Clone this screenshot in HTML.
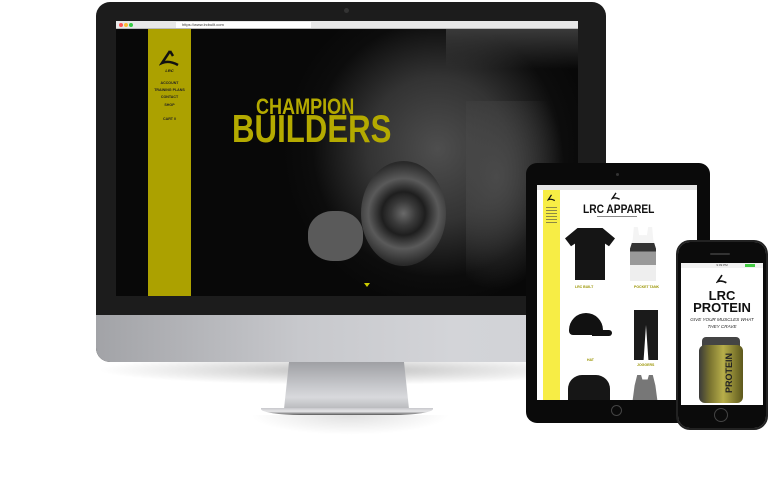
<!DOCTYPE html>
<html><head><meta charset="utf-8"><style>
*{margin:0;padding:0;box-sizing:border-box}
body{width:768px;height:494px;background:#fff;position:relative;overflow:hidden;font-family:"Liberation Sans",sans-serif}
.a{position:absolute}
.cond{font-family:"Liberation Sans Narrow","Liberation Sans",sans-serif;font-weight:bold}
</style></head><body>
<div class="a" style="left:96px;top:355px;width:500px;height:30px;background:radial-gradient(ellipse at center,rgba(0,0,0,.25),rgba(0,0,0,0) 70%)"></div>
<div class="a" style="left:96px;top:2px;width:510px;height:360px;border-radius:14px;background:#1c1c1c;overflow:hidden">
  <div class="a" style="left:0;top:313px;width:510px;height:47px;background:linear-gradient(90deg,#a2a3a7,#c7c8cc 40%,#d3d4d8 70%,#d0d1d5)"></div>
</div>
<div class="a" style="left:344px;top:8px;width:5px;height:5px;border-radius:50%;background:#333"></div>
<div class="a" style="left:116px;top:21px;width:462px;height:275px;background:#080808;overflow:hidden">
  <div class="a" style="left:0;top:0;width:462px;height:8px;background:#e8e8e8;border-bottom:1px solid #bbb"></div>
  <div class="a" style="left:3px;top:2px;width:4px;height:4px;border-radius:50%;background:#f55"></div>
  <div class="a" style="left:8px;top:2px;width:4px;height:4px;border-radius:50%;background:#fb3"></div>
  <div class="a" style="left:13px;top:2px;width:4px;height:4px;border-radius:50%;background:#3c4"></div>
  <div class="a" style="left:60px;top:1px;width:135px;height:6px;background:#fff;font-size:4px;line-height:6px;padding-left:6px;color:#333">https://www.lrcbuilt.com</div>
  <!-- photo -->
  <div class="a" style="left:150px;top:8px;width:312px;height:267px;background:radial-gradient(ellipse 50% 60% at 55% 45%,#4e4e4e,#333 45%,rgba(15,15,15,.6) 80%,rgba(8,8,8,0) 100%)"></div>
  <div class="a" style="left:330px;top:8px;width:132px;height:40px;background:linear-gradient(180deg,#3a3a3a,rgba(40,40,40,0))"></div>
  <div class="a" style="left:245px;top:140px;width:85px;height:105px;border-radius:50%;background:radial-gradient(circle,#6a6a6a 0,#3a3a3a 18%,#1e1e1e 32%,#5a5a5a 52%,#2a2a2a 75%,#1a1a1a 100%)"></div>
  <div class="a" style="left:192px;top:190px;width:55px;height:50px;border-radius:45%;background:#5a5a5a"></div>
  <div class="a" style="left:350px;top:80px;width:100px;height:190px;background:radial-gradient(ellipse at 30% 40%,#4a4a4a,rgba(30,30,30,0) 70%)"></div>
  <div class="a" style="left:32px;top:8px;width:43px;height:267px;background:#aca100"></div>
  <svg class="a" style="left:43px;top:28px" width="22" height="22" viewBox="0 0 22 22"><path d="M11 2 L3 14 Q10 11 19 16" fill="none" stroke="#111" stroke-width="2.5"/><path d="M11 2 L14 7" stroke="#111" stroke-width="2.5"/></svg>
  <div class="a cond" style="left:32px;top:47px;width:43px;text-align:center;font-size:4px;color:#111;font-style:italic">LRC</div>
  <div class="a cond" style="left:32px;top:59px;width:43px;text-align:center;font-size:3.6px;line-height:7.2px;color:#222">ACCOUNT<br>TRAINING PLANS<br>CONTACT<br>SHOP<br><br>CART 0</div>
  <div class="a cond" style="left:140px;top:75px;font-size:22px;line-height:22px;color:#b4aa00;transform:scaleX(.82);transform-origin:left">CHAMPION</div>
  <div class="a cond" style="left:116px;top:89px;font-size:39px;line-height:39px;color:#b4aa00;transform:scaleX(.8);transform-origin:left">BUILDERS</div>
  <div class="a" style="left:248px;top:262px;width:0;height:0;border-left:3px solid transparent;border-right:3px solid transparent;border-top:4px solid #cc0"></div>
</div>
<div class="a" style="left:284px;top:362px;width:125px;height:47px;clip-path:polygon(4% 0,96% 0,100% 100%,0 100%);background:linear-gradient(180deg,#9fa0a4,#c6c7cb 50%,#d8d9dc 75%,#b8b9bc)"></div>
<div class="a" style="left:261px;top:408px;width:172px;height:7px;border-radius:0 0 40px 40px/0 0 6px 6px;background:linear-gradient(180deg,#c8c8cc,#e6e6e8 50%,#555)"></div>
<div class="a" style="left:250px;top:415px;width:200px;height:20px;background:radial-gradient(ellipse at top,rgba(0,0,0,.12),rgba(0,0,0,0) 70%)"></div>
<!-- iPad -->
<div class="a" style="left:526px;top:163px;width:184px;height:260px;border-radius:11px;background:#0a0a0a"></div>
<div class="a" style="left:616px;top:173px;width:3px;height:3px;border-radius:50%;background:#333"></div>
<div class="a" style="left:611px;top:405px;width:11px;height:11px;border-radius:50%;border:1px solid #444"></div>
<div class="a" style="left:537px;top:185px;width:160px;height:215px;background:#fff;overflow:hidden">
  <div class="a" style="left:0;top:0;width:160px;height:5px;background:#e6e6e6"></div>
  <div class="a" style="left:6px;top:5px;width:17px;height:210px;background:#f7ed45"></div>
  <svg class="a" style="left:10px;top:9px" width="9" height="9" viewBox="0 0 22 22"><path d="M11 2 L3 14 Q10 11 19 16" fill="none" stroke="#111" stroke-width="3"/></svg>
  <div class="a" style="left:9px;top:22px;width:11px;height:18px;background:repeating-linear-gradient(180deg,#444 0 1px,transparent 1px 3px);opacity:.6"></div>
  <svg class="a" style="left:74px;top:7px" width="10" height="10" viewBox="0 0 22 22"><path d="M11 2 L3 14 Q10 11 19 16" fill="none" stroke="#111" stroke-width="3"/></svg>
  <div class="a cond" style="left:46px;top:17px;font-size:12px;color:#111;transform:scaleX(.85);transform-origin:left;white-space:nowrap">LRC APPAREL</div>
  <div class="a" style="left:60px;top:31px;width:40px;height:1px;background:#888"></div>
  <div class="a" style="left:28px;top:43px;width:50px;height:52px;background:#151515;clip-path:polygon(25% 0,75% 0,100% 20%,88% 35%,80% 30%,80% 100%,20% 100%,20% 30%,12% 35%,0 20%)"></div>
  <div class="a" style="left:93px;top:42px;width:26px;height:54px;background:linear-gradient(180deg,#f4f4f4 0 30%,#333 30% 45%,#999 45% 70%,#eee 70%);clip-path:polygon(15% 0,30% 0,35% 15%,65% 15%,70% 0,85% 0,90% 25%,100% 40%,100% 100%,0 100%,0 40%,10% 25%)"></div>
  <div class="a cond" style="left:38px;top:100px;font-size:3.5px;color:#9a9400">LRC BUILT</div>
  <div class="a cond" style="left:97px;top:100px;font-size:3.5px;color:#9a9400">POCKET TANK</div>
  <div class="a" style="left:32px;top:128px;width:34px;height:22px;background:#111;border-radius:17px 17px 4px 4px"></div>
  <div class="a" style="left:55px;top:145px;width:20px;height:6px;background:#111;border-radius:0 6px 6px 0"></div>
  <div class="a" style="left:97px;top:125px;width:24px;height:50px;background:#1a1a1a;clip-path:polygon(0 0,100% 0,100% 100%,60% 100%,50% 30%,40% 100%,0 100%)"></div>
  <div class="a cond" style="left:50px;top:173px;font-size:3.5px;color:#9a9400">HAT</div>
  <div class="a cond" style="left:100px;top:178px;font-size:3.5px;color:#9a9400">JOGGERS</div>
  <div class="a" style="left:31px;top:190px;width:42px;height:30px;background:#161616;border-radius:14px 14px 0 0"></div>
  <div class="a" style="left:95px;top:190px;width:26px;height:30px;background:#777;clip-path:polygon(20% 0,35% 0,40% 15%,60% 15%,65% 0,80% 0,90% 35%,100% 100%,0 100%,10% 35%)"></div>
</div>
<!-- iPhone -->
<div class="a" style="left:676px;top:240px;width:92px;height:190px;border-radius:14px;background:#d9d9db;border:2px solid #222"></div>
<div class="a" style="left:678px;top:242px;width:88px;height:186px;border-radius:12px;background:#0b0b0b"></div>
<div class="a" style="left:710px;top:253px;width:20px;height:2px;border-radius:1px;background:#333"></div>
<div class="a" style="left:714px;top:408px;width:14px;height:14px;border-radius:50%;border:1px solid #444"></div>
<div class="a" style="left:681px;top:263px;width:82px;height:142px;background:#fff;overflow:hidden">
  <div class="a" style="left:0;top:0;width:82px;height:5px;background:#f2f2f2;font-size:3px;line-height:5px;color:#333;text-align:center">9:09 PM</div>
  <div class="a" style="left:64px;top:1px;width:10px;height:3px;background:#4c4"></div>
  <svg class="a" style="left:35px;top:11px" width="12" height="12" viewBox="0 0 22 22"><path d="M11 2 L3 14 Q10 11 19 16" fill="none" stroke="#111" stroke-width="3"/></svg>
  <div class="a cond" style="left:0;top:27px;width:82px;text-align:center;font-size:13px;line-height:12px;color:#111">LRC<br>PROTEIN</div>
  <div class="a" style="left:0;top:53px;width:82px;text-align:center;font-size:4.6px;line-height:7px;color:#222;font-style:italic">GIVE YOUR MUSCLES WHAT<br>THEY CRAVE</div>
  <div class="a" style="left:21px;top:74px;width:38px;height:10px;border-radius:4px 4px 0 0;background:#444"></div>
  <div class="a" style="left:18px;top:82px;width:44px;height:58px;border-radius:6px;background:linear-gradient(90deg,#3a3a3a,#7a7430 25%,#b7ae4a 55%,#5d581c)"></div>
  <div class="a cond" style="left:43px;top:130px;font-size:9px;color:#222;transform:rotate(-90deg);transform-origin:left top">PROTEIN</div>
</div>
</body></html>
